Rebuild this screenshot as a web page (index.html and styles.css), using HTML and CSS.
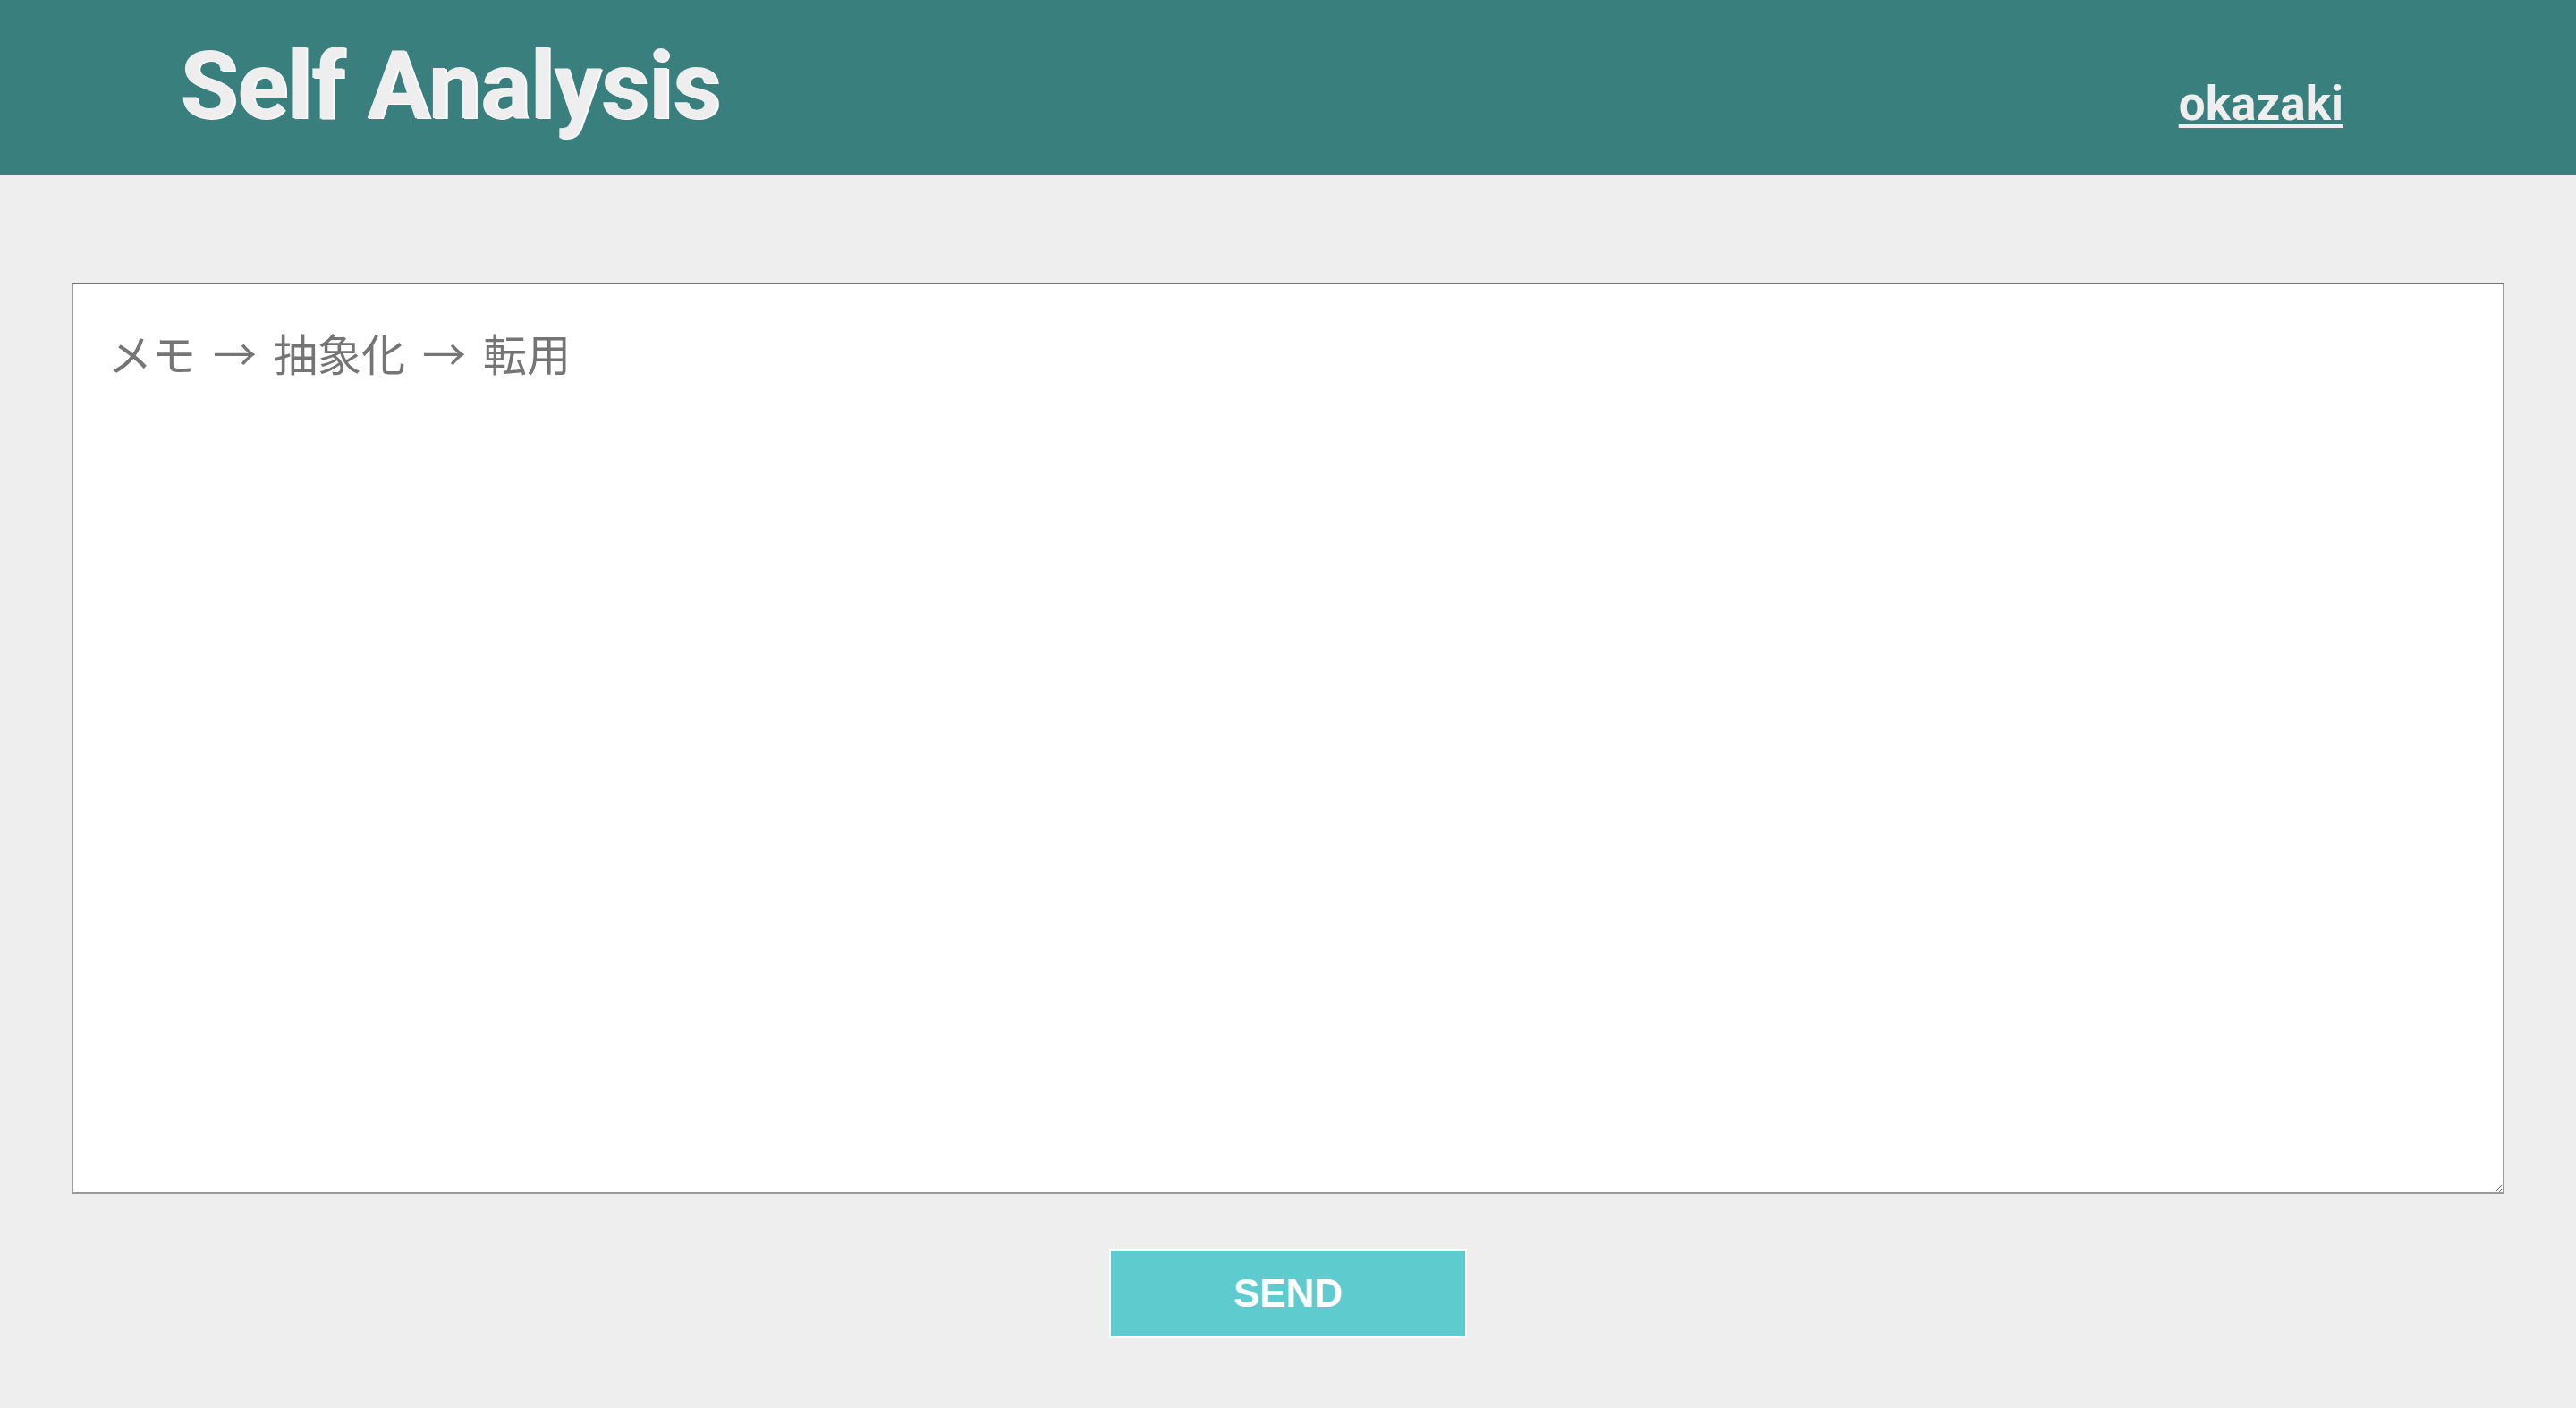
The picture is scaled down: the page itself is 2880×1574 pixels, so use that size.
FILE: index.html
```html
<!DOCTYPE html>
<html lang="ja">
<head>
<meta charset="utf-8">
<title>Self Analysis</title>
<link rel="stylesheet" href="styles.css">
</head>
<body>
<header class="site-header">
  <h1 class="site-title">Self Analysis</h1>
  <a class="user-link" href="#">okazaki</a>
</header>
<main class="main">
  <form class="memo-form">
    <textarea class="memo-input" placeholder="メモ → 抽象化 → 転用"></textarea>
    <div class="actions">
      <button class="send-btn" type="button">SEND</button>
    </div>
  </form>
</main>
</body>
</html>
```
FILE: styles.css
```css
html, body {
  margin: 0;
  padding: 0;
}
body {
  background: #eeeeee;
  font-family: Roboto, "Noto Sans CJK JP", sans-serif;
  min-height: 100vh;
}
.site-header {
  height: 196px;
  background: #387f7d;
  display: flex;
  justify-content: space-between;
  align-items: flex-start;
  padding: 0 260px 0 201px;
  box-sizing: border-box;
}
.site-title {
  margin: 44px 0 0;
  font-family: Roboto, sans-serif;
  font-weight: 700;
  font-size: 105px;
  line-height: 1;
  color: #eeeeee;
  text-shadow: 2px 1px 0 #ffffff;
  letter-spacing: -0.7px;
}
.user-link {
  margin-top: 90px;
  font-family: Roboto, sans-serif;
  font-weight: 700;
  font-size: 53px;
  line-height: 1;
  color: #eeeeee;
  text-decoration: underline;
  text-decoration-thickness: 4px;
  text-underline-offset: 5px;
}
.main {
  padding: 120px 80px 0;
}
.memo-form {
  display: flex;
  flex-direction: column;
}
.memo-input {
  box-sizing: border-box;
  width: 100%;
  height: 1019px;
  margin: 0;
  padding: 40px 39px;
  border: 2px solid #999999;
  border-top-color: #777777;
  background: #ffffff;
  font-family: "Noto Sans CJK JP", sans-serif;
  font-size: 49px;
  word-spacing: 8px;
  color: #333333;
  resize: both;
}
.memo-input::placeholder {
  color: #757575;
}
.actions {
  display: flex;
  justify-content: center;
  margin-top: 61px;
}
.send-btn {
  width: 400px;
  height: 100px;
  border: 2px solid #ffffff;
  background: #5ecbcf;
  color: #ffffff;
  font-family: "Liberation Sans", Arial, sans-serif;
  font-weight: 700;
  font-size: 44px;
  padding: 0;
  cursor: pointer;
}
```
